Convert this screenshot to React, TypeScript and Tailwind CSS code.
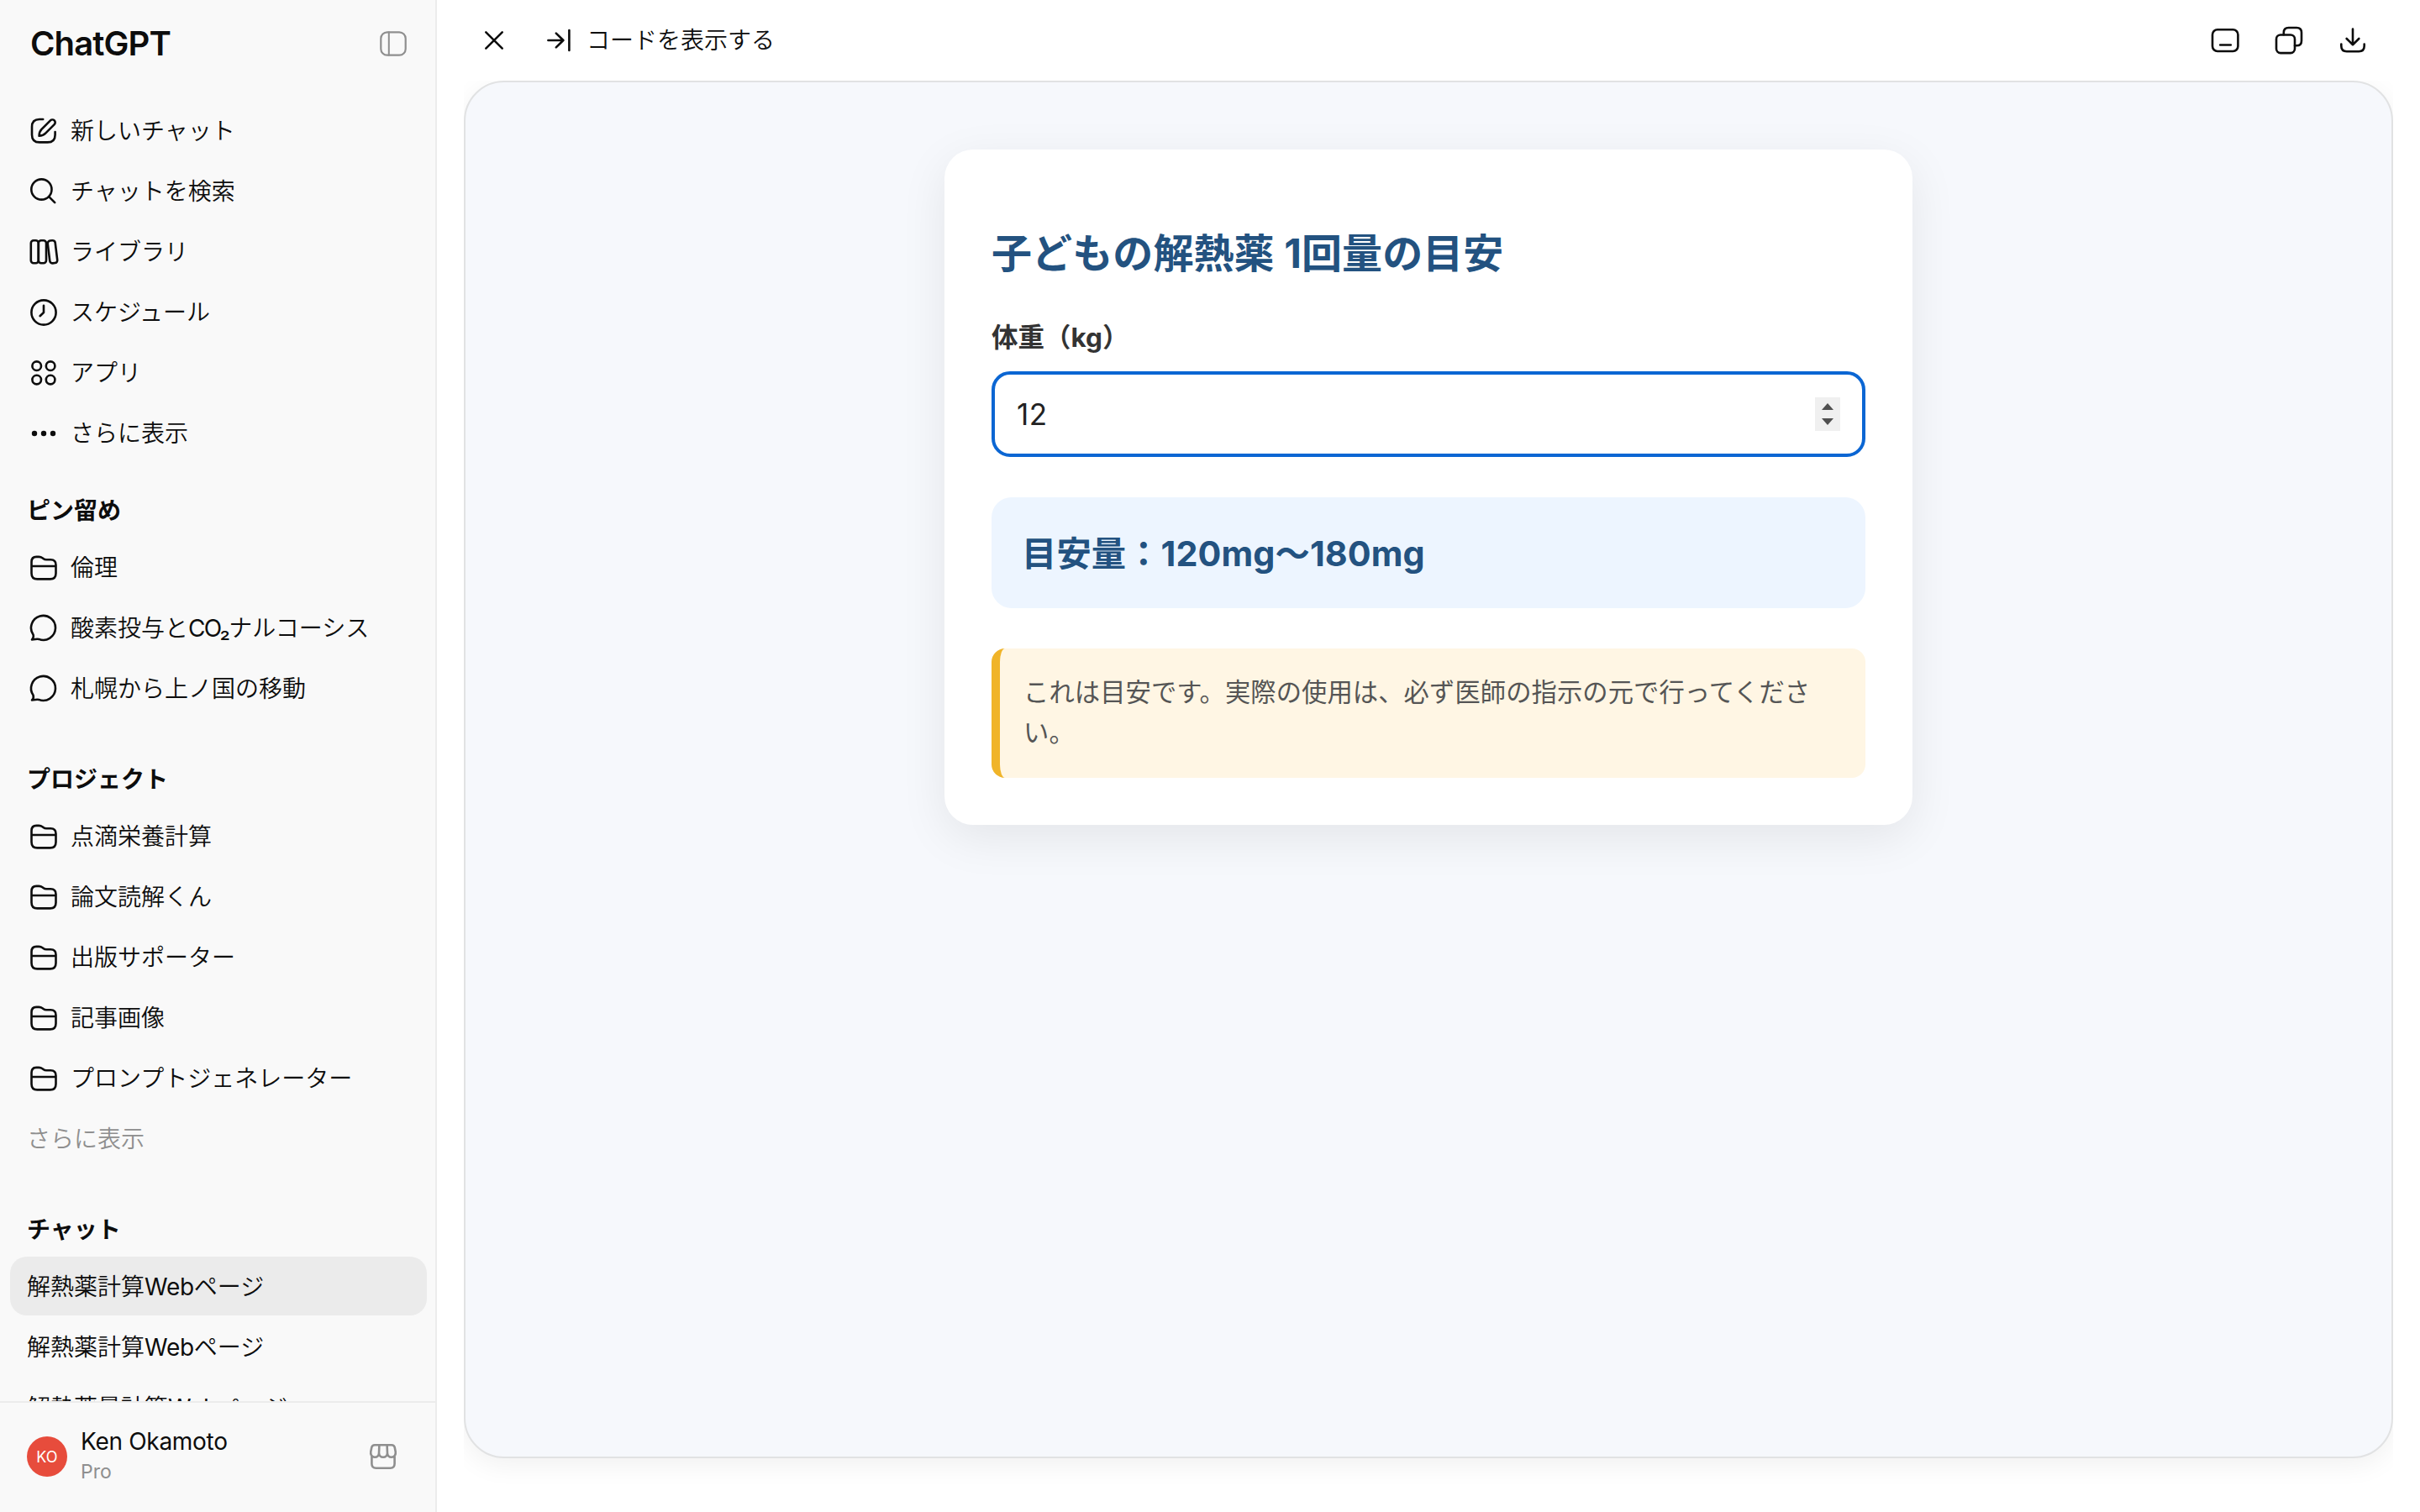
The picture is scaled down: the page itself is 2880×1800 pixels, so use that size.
import { type ReactNode } from 'react';

interface IconProps {
  children: ReactNode;
  className?: string;
}

function Icon({ children, className = 'text-[#0d0d0d]' }: IconProps) {
  return (
    <svg
      viewBox="0 0 40 40"
      fill="none"
      stroke="currentColor"
      strokeWidth={2.6}
      strokeLinecap="round"
      strokeLinejoin="round"
      className={`size-10 shrink-0 ${className}`}
    >
      {children}
    </svg>
  );
}

const icons = {
  edit: (
    <>
      <path d="M19.2 6H15C9 6 6 9 6 15v9.400c0 6 3 9 9 9h9.600c6 0 9-3 9-9V21" />
      <path d="M14.600 25.800c0-3.500.7-5.700 2.900-7.900L28 7.400a3.300 3.300 0 0 1 4.700 4.700L22.200 22.700c-2.100 2.100-4.200 2.900-7.600 3.100z" />
    </>
  ),
  search: (
    <>
      <circle cx="17.400" cy="17.500" r="12.100" />
      <path d="m26.200 26.200 7 7" />
    </>
  ),
  library: (
    <>
      <rect x="4.800" y="6.300" width="9" height="27" rx="3.200" />
      <rect x="13.800" y="6.300" width="9.200" height="27" rx="3.200" />
      <rect x="26" y="6.300" width="9" height="27" rx="3.200" transform="rotate(-7 30.500 19.800)" />
    </>
  ),
  clock: (
    <>
      <circle cx="20" cy="20" r="14.600" />
      <path d="M20 11.800V20l-4.400 4.200" />
    </>
  ),
  apps: (
    <>
      <circle cx="11.700" cy="11.700" r="5.300" />
      <circle cx="28.100" cy="11.700" r="5.300" />
      <circle cx="11.700" cy="28.100" r="5.300" />
      <circle cx="28.100" cy="28.100" r="5.300" />
    </>
  ),
  more: (
    <g fill="currentColor" stroke="none">
      <circle cx="9" cy="20" r="3.200" />
      <circle cx="20" cy="20" r="3.200" />
      <circle cx="31" cy="20" r="3.200" />
    </g>
  ),
  folder: (
    <path d="M5.500 13c0-4 2-6.100 5.800-6.100h3c1.800 0 3 .4 4.200 1.300l1 .8c1.100.9 2 1.300 3.800 1.300h5c4.200 0 6.200 2 6.200 6.200v10c0 4.600-2.200 6.900-6.800 6.900H12.300c-4.600 0-6.800-2.300-6.800-6.900zM5.500 18h29" />
  ),
  chat: (
    <path d="M6 33.400c1.700-1.500 2.100-3.500 1.600-5.700A14.500 14.500 0 1 1 14.200 32.900c-3-.7-4.200.5-8.200.5z" />
  ),
};

interface NavItem {
  icon: ReactNode;
  label: ReactNode;
}

const menu: NavItem[] = [
  { icon: icons.edit, label: '新しいチャット' },
  { icon: icons.search, label: 'チャットを検索' },
  { icon: icons.library, label: 'ライブラリ' },
  { icon: icons.clock, label: 'スケジュール' },
  { icon: icons.apps, label: 'アプリ' },
  { icon: icons.more, label: 'さらに表示' },
];

const pinned: NavItem[] = [
  { icon: icons.folder, label: '倫理' },
  {
    icon: icons.chat,
    label: (
      <>
        酸素投与と<span className="font-normal tracking-[-1.6px]">CO₂</span>ナルコーシス
      </>
    ),
  },
  { icon: icons.chat, label: '札幌から上ノ国の移動' },
];

const projects = ['点滴栄養計算', '論文読解くん', '出版サポーター', '記事画像', 'プロンプトジェネレーター'];

const chats = ['解熱薬計算', '解熱薬計算', '解熱薬量計算'];

function NavRow({ icon, label }: NavItem) {
  return (
    <a className="flex h-[72px] shrink-0 items-center gap-3 whitespace-nowrap px-8">
      <Icon>{icon}</Icon>
      <span>{label}</span>
    </a>
  );
}

function SectionTitle({ children }: { children: ReactNode }) {
  return <h2 className="h-11 shrink-0 px-8 pt-0.5 font-semibold leading-[44px]">{children}</h2>;
}

function Sidebar() {
  return (
    <aside className="flex w-[520px] shrink-0 flex-col border-r-2 border-[#ececec] bg-[#f9f9f9]">
      <div className="flex h-[104px] shrink-0 items-center justify-between pl-9 pr-[30px]">
        <span className="text-[40px] font-semibold leading-none tracking-[-0.9px]">ChatGPT</span>
        <Icon className="text-[#8f8f8f]">
          <rect x="5.300" y="6.300" width="29.400" height="27.400" rx="7.500" strokeWidth="2.200" />
          <path d="M14.800 6.300v27.400" strokeWidth="2" />
        </Icon>
      </div>

      <div className="flex min-h-0 flex-1 flex-col overflow-hidden pt-4">
        {menu.map((item, i) => (
          <NavRow key={i} {...item} />
        ))}

        <div className="h-8 shrink-0" />
        <SectionTitle>ピン留め</SectionTitle>
        <div className="h-3 shrink-0" />
        {pinned.map((item, i) => (
          <NavRow key={i} {...item} />
        ))}

        <div className="h-12 shrink-0" />
        <SectionTitle>プロジェクト</SectionTitle>
        <div className="h-3 shrink-0" />
        {projects.map((name) => (
          <NavRow key={name} icon={icons.folder} label={name} />
        ))}
        <a className="flex h-[72px] shrink-0 items-center px-8 text-[#8f8f8f]">さらに表示</a>

        <div className="h-12 shrink-0" />
        <SectionTitle>チャット</SectionTitle>
        <div className="h-3 shrink-0" />
        <div className="flex flex-col gap-0.5 pl-3 pr-2.5">
          {chats.map((title, i) => (
            <a
              key={i}
              className={`flex h-[70px] shrink-0 items-center rounded-[20px] px-5 pt-0.5 ${i === 0 ? 'bg-[#ebebeb]' : ''}`}
            >
              <span>
                {title}
                <span className="font-normal tracking-[-0.3px]">Web</span>ページ
              </span>
            </a>
          ))}
        </div>
      </div>

      <div className="flex h-[132px] shrink-0 items-center border-t-2 border-[#ececec] pb-0.5 pl-8 pr-[42px] font-normal">
        <div className="flex size-12 items-center justify-center rounded-full bg-[#e74c3c] text-[18px] text-white">
          KO
        </div>
        <div className="ml-4 flex flex-1 flex-col">
          <span className="leading-[36px] tracking-[-0.3px]">Ken Okamoto</span>
          <span className="text-[23px] leading-[36px] text-[#8f8f8f]">Pro</span>
        </div>
        <Icon className="text-[#8f8f8f]">
          <path d="M10 6.300h20c2.200 0 3.300.9 3.700 2.800l1 5c.7 3.700-1.200 6.700-4.700 6.700-3.200 0-5-2.300-5-5 0 2.700-2 5-5 5s-5-2.300-5-5c0 2.700-1.800 5-5 5-3.500 0-5.400-3-4.700-6.700l1-5c.4-1.900 1.500-2.800 3.700-2.800zM15.400 6.300 15 15.800M24.600 6.300l.4 9.500M6.400 20.300v8.200c0 3.500 1.600 5.200 5.100 5.200h17c3.500 0 5.100-1.700 5.100-5.200v-8.200" />
        </Icon>
      </div>
    </aside>
  );
}

function TopBar() {
  return (
    <header className="flex h-24 shrink-0 items-center pl-12 pr-[60px]">
      <Icon>
        <path d="m10.300 10.300 19.400 19.400M29.700 10.300 10.300 29.700" />
      </Icon>
      <div className="ml-[38px] flex items-center gap-3">
        <Icon>
          <path d="M6.400 20h18M15.800 11.600l8.600 8.400-8.600 8.400M31.400 8v24" />
        </Icon>
        <span>コードを表示する</span>
      </div>
      <div className="ml-auto flex gap-9">
        <Icon>
          <rect x="5" y="7.200" width="30.400" height="25.800" rx="6" />
          <path d="M14.200 25.500h12.600" />
        </Icon>
        <Icon>
          <rect x="5" y="13.500" width="22" height="21.600" rx="5" />
          <path d="M13.800 13.200v-2.400c0-3.900 2-5.800 5.800-5.800h9.600c3.900 0 5.800 1.900 5.800 5.800v9.700c0 3.900-1.900 5.800-5.800 5.800H27" />
        </Icon>
        <Icon>
          <path d="M20 6.500v18.600M12.700 18l7.300 7.200 7.300-7.200M6.300 24.600v2.200c0 4.300 2.200 6.400 6.500 6.400h14.400c4.300 0 6.500-2.100 6.500-6.400v-2.200" />
        </Icon>
      </div>
    </header>
  );
}

function DoseCard() {
  return (
    <div className="mt-[80px] flex h-[804px] w-[1152px] flex-col rounded-[34px] bg-white px-[56px] pt-[94px] font-normal shadow-[0_15px_56px_rgba(0,0,0,0.08)]">
      <h1 className="text-[48px] font-bold leading-[60px] tracking-[0.1px] text-[#235280]">子どもの解熱薬 1回量の目安</h1>
      <label className="mt-[46px] text-[31.500px] font-bold leading-[48px] text-[#333]">体重（kg）</label>
      <div className="mt-[16px] flex h-[102px] shrink-0 items-center justify-between rounded-[22px] border-4 border-[#0b66d3] pl-[26px] pr-[26px]">
        <span className="text-[35px] tracking-[0.4px] text-[#222]">12</span>
        <div className="flex h-10 w-[30px] flex-col items-center justify-center gap-[10px] bg-[#f0f0f0]">
          <svg viewBox="0 0 14 8" className="h-2 w-3.5 text-[#505050]">
            <path d="M7 0l7 8H0z" fill="currentColor" />
          </svg>
          <svg viewBox="0 0 14 8" className="h-2 w-3.5 text-[#505050]">
            <path d="M7 8L0 0h14z" fill="currentColor" />
          </svg>
        </div>
      </div>
      <div className="mt-12 flex h-[132px] shrink-0 items-center rounded-[24px] bg-[#edf5ff] pl-[36px] pt-[3px] text-[41.300px] font-bold tracking-[0.1px] text-[#235280]">
        目安量：120mg〜180mg
      </div>
      <p className="mt-12 h-[154px] shrink-0 rounded-[16px] border-l-[10px] border-[#f0b429] bg-[#fff6e4] pl-[28px] pr-[30px] pt-[28px] text-[30.300px] leading-[48px] tracking-[0.08px] text-[#555]">
        これは目安です。実際の使用は、必ず医師の指示の元で行ってください。
      </p>
    </div>
  );
}

export default function App() {
  return (
    <div className="flex h-[1800px] w-[2880px] overflow-hidden bg-white font-['Inter','Noto_Sans_CJK_JP',sans-serif] text-[28px] font-[350] text-[#0d0d0d]">
      <Sidebar />
      <main className="flex flex-1 flex-col">
        <TopBar />
        <div className="mx-8 flex-1 overflow-hidden">
          <section className="flex h-[1640px] justify-center rounded-[48px] border-2 border-[#e1e2e3] bg-[#f6f8fc] shadow-[0_8px_32px_rgba(0,0,0,0.06)]">
            <DoseCard />
          </section>
        </div>
      </main>
    </div>
  );
}
